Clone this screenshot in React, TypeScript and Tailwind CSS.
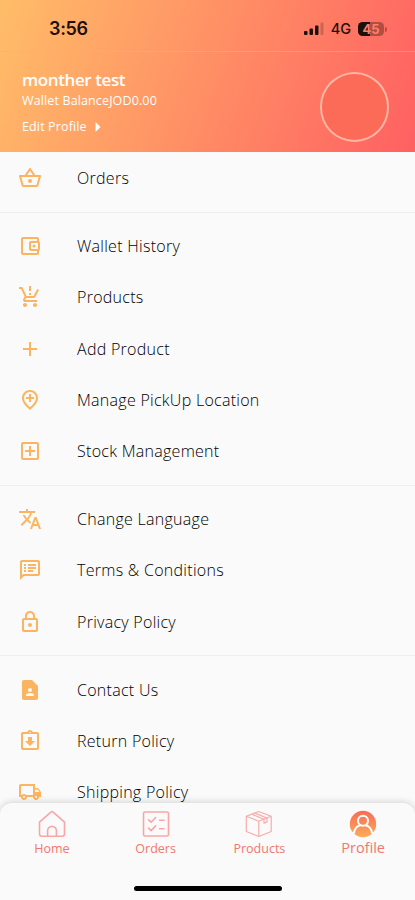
import React, { useState } from 'react';
import type { IconType } from 'react-icons';
import {
  MdAdd,
  MdContactPage,
  MdLockOutline,
  MdOutlineAccountBalanceWallet,
  MdOutlineAddBox,
  MdOutlineAddLocation,
  MdOutlineAssignmentReturned,
  MdOutlineLocalShipping,
  MdOutlineShoppingBasket,
  MdOutlineSpeakerNotes,
  MdProductionQuantityLimits,
  MdTranslate,
} from 'react-icons/md';

type MenuItem = { label: string; icon: IconType };

const MENU_GROUPS: MenuItem[][] = [
  [{ label: 'Orders', icon: MdOutlineShoppingBasket }],
  [
    { label: 'Wallet History', icon: MdOutlineAccountBalanceWallet },
    { label: 'Products', icon: MdProductionQuantityLimits },
    { label: 'Add Product', icon: MdAdd },
    { label: 'Manage PickUp Location', icon: MdOutlineAddLocation },
    { label: 'Stock Management', icon: MdOutlineAddBox },
  ],
  [
    { label: 'Change Language', icon: MdTranslate },
    { label: 'Terms & Conditions', icon: MdOutlineSpeakerNotes },
    { label: 'Privacy Policy', icon: MdLockOutline },
  ],
  [
    { label: 'Contact Us', icon: MdContactPage },
    { label: 'Return Policy', icon: MdOutlineAssignmentReturned },
    { label: 'Shipping Policy', icon: MdOutlineLocalShipping },
  ],
];

function HomeIcon() {
  return (
    <svg className="w-7 h-7" viewBox="0 0 28 28" fill="none" stroke="#f9a6a8" strokeWidth="1.6" strokeLinejoin="round">
      <path d="M1.500 12.200 12.600 2.300a2 2 0 0 1 2.800 0L26.500 12.200V24a2.200 2.200 0 0 1-2.200 2.200H3.700A2.200 2.200 0 0 1 1.500 24Z" />
      <path d="M9.600 26V20.800a4.400 4.400 0 0 1 8.800 0V26" />
    </svg>
  );
}

function OrdersIcon() {
  return (
    <svg className="w-7 h-7" viewBox="0 0 28 28" fill="none" stroke="#f9a6a8" strokeWidth="1.6" strokeLinecap="round" strokeLinejoin="round">
      <rect x="1.500" y="2" width="25" height="24" rx="1.500" />
      <path d="m6.500 9.800 2.600 2.400 4.600-4.700M6.500 18.200l2.600 2.400 4.600-4.700" />
      <path d="M17.500 10.200h4.500M17.500 18.800h4.500" />
    </svg>
  );
}

function ProductsIcon() {
  return (
    <svg className="w-7 h-7" viewBox="0 0 28 28" fill="none" stroke="#f7acad" strokeWidth="1.2" strokeLinejoin="round">
      <path d="M1.300 6.300 13.500 1.500l12.700 4.800v15.200L13.800 26.500 1.300 21.500Z" />
      <path d="M1.300 6.300 13.800 11.300l12.400-5M13.800 11.300v15.200" />
      <path d="m6.800 4.300 12.200 4.900v4l3-1.300V8L9.900 3.100" />
    </svg>
  );
}

function ProfileIcon() {
  return (
    <svg className="w-7 h-7" viewBox="0 0 28 28" fill="none">
      <defs>
        <linearGradient id="avatar" x1="0" y1="0" x2="0" y2="1">
          <stop offset="0" stopColor="#fa6b55" />
          <stop offset="1" stopColor="#fbab5c" />
        </linearGradient>
      </defs>
      <circle cx="14" cy="14" r="13.200" fill="url(#avatar)" />
      <circle cx="14" cy="10.800" r="5" stroke="#fff" strokeWidth="2" />
      <path d="M4.800 23.500c.8-5.200 3.700-7.700 6.700-8.300M23.200 23.500c-.8-5.200-3.700-7.700-6.700-8.300" stroke="#fff" strokeWidth="2" />
    </svg>
  );
}

const TABS = [
  { id: 'home', label: 'Home', icon: HomeIcon },
  { id: 'orders', label: 'Orders', icon: OrdersIcon },
  { id: 'products', label: 'Products', icon: ProductsIcon },
  { id: 'profile', label: 'Profile', icon: ProfileIcon },
];

function StatusBar() {
  return (
    <div className="flex h-[52px] items-start justify-between pl-[49px] pr-[28px] pt-[18px] border-b border-[#ffab74]/50">
      <span className="font-['Inter',sans-serif] text-[18px] leading-[22px] font-semibold tracking-[-0.3px] text-[#1c100c]">3:56</span>
      <div className="flex items-center h-[22px] text-[#1c100c]">
        <svg className="w-[20px] h-[14px]" viewBox="0 0 20 14" fill="currentColor">
          <rect x="0" y="9" width="3.500" height="4" rx="1" />
          <rect x="5.500" y="6.500" width="3.500" height="6.500" rx="1" />
          <rect x="11" y="3.500" width="3.500" height="9.500" rx="1" />
          <rect x="16.500" y="0.500" width="3" height="12.500" rx="1" opacity="0.220" />
        </svg>
        <span className="ml-[7px] font-['Inter',sans-serif] text-[14.5px] leading-[22px] font-medium">4G</span>
        <div className="ml-[7px] flex h-[14px] w-[26px] items-center justify-center rounded-[4.5px] bg-[linear-gradient(90deg,#1c100c_46%,#b14e44_46%)]">
          <span className="font-['Inter',sans-serif] text-[13px] leading-[14px] font-bold text-[#ff8069]">45</span>
        </div>
        <div className="ml-px h-[5px] w-[2px] rounded-r-full bg-[#b14e44]" />
      </div>
    </div>
  );
}

function ProfileHeader() {
  return (
    <header className="h-[152px] shrink-0 bg-[linear-gradient(110deg,#ffbd68_0%,#ff6062_100%)]">
      <StatusBar />
      <div className="flex justify-between pl-[22px] pr-[26px] text-white">
        <div className="flex flex-col items-start pt-[16px]">
          <h1 className="text-[17px] leading-6 font-semibold tracking-[-0.4px]">monther test</h1>
          <p className="text-[12.5px] leading-[17px] tracking-[0.13px]">Wallet BalanceJOD0.00</p>
          <button className="mt-[9px] flex items-center text-[12.5px] leading-[18px] tracking-[0.13px]">
            Edit Profile
            <svg className="ml-[8px] w-[6px] h-[10px]" viewBox="0 0 6 10" fill="currentColor">
              <path d="M0.500 0 5.500 5 0.500 10Z" />
            </svg>
          </button>
        </div>
        <div className="mt-[20px] h-[70px] w-[69px] rounded-full border-2 border-[#ffcfbf]/75 bg-[#fc6b58]" />
      </div>
    </header>
  );
}

export default function App() {
  const [activeTab, setActiveTab] = useState('profile');

  return (
    <div className="flex h-[900px] w-full flex-col overflow-hidden bg-[#fafafa] font-['Open_Sans',sans-serif]">
      <ProfileHeader />

      {/* Menu */}
      <main className="min-h-0 flex-1 overflow-hidden pt-[0.4px]">
        {MENU_GROUPS.map((group, i) => (
          <section key={i} className={i > 0 ? 'mt-[8px] border-t border-[#eeeeee] pt-[8.1px]' : ''}>
            {group.map(({ label, icon: Icon }) => (
              <button key={label} className="flex h-[51.2px] w-full items-center pl-[18px] text-left">
                <Icon className="w-6 h-6 text-[#fbb45f]" />
                <span className="ml-[35px] text-[16px] leading-6 font-light tracking-[0.28px] text-black">{label}</span>
              </button>
            ))}
          </section>
        ))}
      </main>

      {/* Bottom navigation */}
      <nav className="relative h-[97px] shrink-0 rounded-t-[12px] bg-[#fafafa] shadow-[0_-1px_7px_rgba(0,0,0,0.16)]">
        <div className="grid grid-cols-4">
          {TABS.map(({ id, label, icon: Icon }) => {
            const isActive = activeTab === id;
            return (
              <button key={id} onClick={() => setActiveTab(id)} className="flex flex-col items-center pt-[7px]">
                <Icon />
                <span
                  className={`leading-[20px] text-[#f0776f] ${isActive ? 'text-[14.5px]' : 'pt-px text-[12.5px]'}`}
                >
                  {label}
                </span>
              </button>
            );
          })}
        </div>
        <div className="mx-auto mt-[27px] h-[5px] w-[148px] rounded-full bg-black" />
      </nav>
    </div>
  );
}
